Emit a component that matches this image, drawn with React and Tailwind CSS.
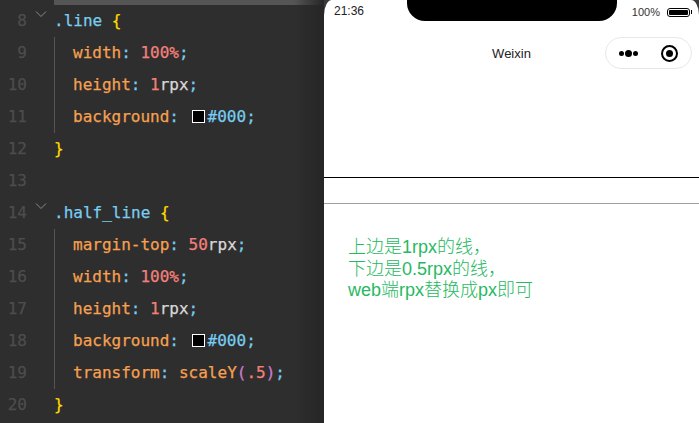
const orange = "text-[#f7a050]";
const blue = "text-[#78cdf0]";
const red = "text-[#f5807a]";
const plain = "text-[#d8d8d8]";
const yellow = "text-[#ffd800]";

function Swatch() {
  return <span className="inline-block w-[13px] h-[13px] bg-black border border-white mr-[3px] ml-[3px] align-[-1px]" />;
}

function Prop({ name, children }) {
  return (
    <span className="pl-[19px]">
      <span className={orange}>{name}</span>
      <span className={blue}>: </span>
      {children}
      <span className={blue}>;</span>
    </span>
  );
}

const lines = [
  { n: 8, fold: true, code: <span><span className={blue}>.line </span><span className={yellow}>{"{"}</span></span> },
  { n: 9, guide: true, code: <Prop name="width"><span className={red}>100%</span></Prop> },
  { n: 10, guide: true, code: <Prop name="height"><span className={red}>1</span><span className={plain}>rpx</span></Prop> },
  { n: 11, guide: true, code: <Prop name="background"><Swatch /><span className={blue}>#000</span></Prop> },
  { n: 12, code: <span className={yellow}>{"}"}</span> },
  { n: 13, code: null },
  { n: 14, fold: true, code: <span><span className={blue}>.half_line </span><span className={yellow}>{"{"}</span></span> },
  { n: 15, guide: true, code: <Prop name="margin-top"><span className={red}>50</span><span className={plain}>rpx</span></Prop> },
  { n: 16, guide: true, code: <Prop name="width"><span className={red}>100%</span></Prop> },
  { n: 17, guide: true, code: <Prop name="height"><span className={red}>1</span><span className={plain}>rpx</span></Prop> },
  { n: 18, guide: true, code: <Prop name="background"><Swatch /><span className={blue}>#000</span></Prop> },
  {
    n: 19,
    guide: true,
    code: (
      <Prop name="transform">
        <span className={orange}>scaleY</span>
        <span className="text-[#cc7ccc]">(</span>
        <span className={red}>.5</span>
        <span className="text-[#cc7ccc]">)</span>
      </Prop>
    ),
  },
  { n: 20, code: <span className={yellow}>{"}"}</span> },
];

function Editor() {
  return (
    <div className="relative w-[324px] h-[423px] shrink-0 bg-[#2e2e2e] overflow-hidden font-['DejaVu_Sans_Mono',monospace] text-[16px] [-webkit-text-stroke:0.25px]">
      <div className="absolute top-0 left-[54px] right-0 h-[5px] bg-[#555555]" />
      <div className="absolute top-0 bottom-0 right-0 w-[30px] bg-gradient-to-r from-transparent to-[#262626]" />
      <div className="pt-[5px]">
        {lines.map((l) => (
          <div key={l.n} className="relative flex h-[32px] leading-[32px] whitespace-pre">
            <span className="w-[27px] text-right text-[#4d4d4d]">{l.n}</span>
            <span className="w-[27px] flex justify-center pt-[5px] pl-[1px]">
              {l.fold && (
                <svg width="12" height="8" viewBox="0 0 12 8" fill="none" stroke="#8a8a8a" strokeWidth="1">
                  <path d="M1 1.5l5 5 5-5" />
                </svg>
              )}
            </span>
            {l.guide && <span className="absolute left-[54px] top-0 bottom-0 w-px bg-[#555555]" />}
            <span>{l.code}</span>
          </div>
        ))}
      </div>
    </div>
  );
}

function Phone() {
  return (
    <div className="relative flex-1 h-[423px] bg-white rounded-t-[8px_15px] font-['Inter','Noto_Sans_CJK_SC',sans-serif]">
      <div className="relative h-[66px]">
        <div className="flex justify-between items-start pl-[10px] pr-[7px] pt-[2px] text-[12px] text-[#222222]">
          <span className="font-['Liberation_Sans',sans-serif]">21:36</span>
          <div className="flex items-center gap-[7px] pt-[2px] text-[11px] font-['Liberation_Sans',sans-serif] text-[#333333]">
            <span>100%</span>
            <span className="flex items-center">
              <span className="w-[23px] h-[9px] border border-black rounded-[3px] p-px flex">
                <span className="flex-1 bg-black rounded-[1px]" />
              </span>
              <span className="w-px h-[4px] bg-black ml-px" />
            </span>
          </div>
        </div>
        <div className="absolute top-0 left-[83px] w-[210px] h-[21px] bg-black rounded-b-[18px]" />
        <div className="absolute top-[37px] right-[7px] w-[87px] h-[32px] bg-white border border-[#e8e8e8] rounded-full flex items-center justify-between px-[13px]">
          <span className="flex items-center gap-px">
            <span className="w-[5px] h-[5px] rounded-full bg-black" />
            <span className="w-[7px] h-[7px] rounded-full bg-black" />
            <span className="w-[5px] h-[5px] rounded-full bg-black" />
          </span>
          <span className="w-[17px] h-[17px] rounded-full border-2 border-black flex items-center justify-center">
            <span className="w-[7px] h-[7px] rounded-full bg-black" />
          </span>
        </div>
      </div>
      <div className="text-center text-[13px] leading-[16px] text-[#222222] font-['Liberation_Sans',sans-serif] -mt-[20px]">Weixin</div>
      <div className="h-px bg-black mt-[115px]" />
      <div className="h-px bg-[#a0a0a0] mt-[25px]" />
      <div className="mt-[33px] ml-[24px] text-[18px] leading-[21.5px] font-light text-[#27b95f] font-['Liberation_Sans','Noto_Sans_CJK_SC',sans-serif]">
        <div>上边是1rpx的线，</div>
        <div>下边是0.5rpx的线，</div>
        <div>web端rpx替换成px即可</div>
      </div>
    </div>
  );
}

export default function App() {
  return (
    <div className="flex w-[699px] h-[423px] overflow-hidden bg-[#3a3a3a]">
      <Editor />
      <Phone />
    </div>
  );
}
